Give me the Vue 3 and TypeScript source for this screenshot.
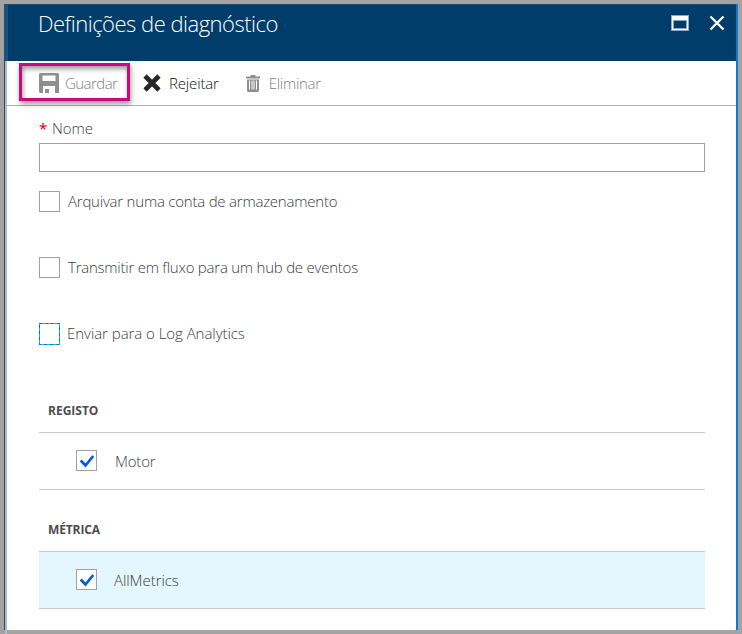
<script setup lang="ts">
import { ref } from 'vue'

interface Destination {
  id: string
  label: string
  checked: boolean
  focused?: boolean
}

interface Category {
  id: string
  title: string
  item: string
  checked: boolean
  highlighted: boolean
}

const name = ref('')

const destinations = ref<Destination[]>([
  { id: 'archive', label: 'Arquivar numa conta de armazenamento', checked: false },
  { id: 'stream', label: 'Transmitir em fluxo para um hub de eventos', checked: false },
  { id: 'send', label: 'Enviar para o Log Analytics', checked: false, focused: true },
])

const categories = ref<Category[]>([
  { id: 'registo', title: 'REGISTO', item: 'Motor', checked: true, highlighted: false },
  { id: 'metrica', title: 'MÉTRICA', item: 'AllMetrics', checked: true, highlighted: true },
])
</script>

<template>
  <div class="frame">
    <section class="blade">
      <header class="header">
        <h1 class="title">Definições de diagnóstico</h1>
        <div class="window-actions">
          <svg class="maximize" width="18" height="16" viewBox="0 0 18 16">
            <rect width="18" height="16" fill="#8ba8c1" />
            <path d="M1 1h16v14H1z" fill="#fff" />
            <path d="M2 5h14v9H2z" fill="#8ba8c1" />
            <path d="M3 6h12v7H3z" fill="#003d6b" />
          </svg>
          <svg class="close" width="16" height="16" viewBox="0 0 16 16">
            <path d="M1.500 1.500l13 13M14.500 1.500l-13 13" stroke="#fff" stroke-width="2.300" />
          </svg>
        </div>
      </header>

      <nav class="toolbar">
        <button class="command save">
          <svg width="20" height="20" viewBox="0 0 20 20">
            <path fill="#8f8f8f" fill-rule="evenodd" d="M1 0h18l1 1v19h-4v-7H4v7H1l-1-1V1zM3.500 2.500V8h13V2.500z" />
            <path fill="#8f8f8f" d="M6 16h4v4H6z" />
          </svg>
          <span class="t-save">Guardar</span>
        </button>
        <button class="command discard">
          <svg width="18" height="18" viewBox="0 0 18 18">
            <path d="M2 2l14 14M16 2L2 16" stroke="#262626" stroke-width="4.600" />
          </svg>
          <span class="t-discard">Rejeitar</span>
        </button>
        <button class="command remove">
          <svg width="14" height="17" viewBox="0 0 14 17">
            <path fill="#8f8f8f" d="M4.500 0h5v1.500H14V3.500H0V1.500h4.500zM1 4.500h12V16l-1 1H2l-1-1z" />
            <path fill="#fff" d="M3 5.500h1v9H3zM5.500 5.500h1v9h-1zM7.500 5.500h1v9h-1zM10 5.500h1v9h-1z" />
          </svg>
          <span class="t-remove">Eliminar</span>
        </button>
      </nav>

      <main class="content">
        <label class="name-label" for="setting-name"><span class="star">*</span><span class="t-name">Nome</span></label>
        <input id="setting-name" v-model="name" class="name-input" type="text" />

        <div class="destinations">
          <label v-for="d in destinations" :key="d.id" class="destination">
            <input v-model="d.checked" type="checkbox" class="native" />
            <span class="box" :class="{ focused: d.focused }">
              <svg v-if="d.focused" width="21" height="22" viewBox="0 0 21 22">
                <rect x=".5" y=".5" width="20" height="21" fill="none" stroke="#12b2f2" />
                <rect x=".5" y=".5" width="20" height="21" fill="none" stroke="#075c91" stroke-dasharray="2 4" />
              </svg>
              <svg v-else-if="d.checked" width="19" height="19" viewBox="0 0 19 19">
                <path d="M3.700 9.500l4.800 5 7.700-9.500" fill="none" stroke="#015cda" stroke-width="2.700" />
              </svg>
            </span>
            <span class="destination-text" :class="'t-' + d.id">{{ d.label }}</span>
          </label>
        </div>

        <section v-for="c in categories" :key="c.id" class="category">
          <h2 :class="'t-' + c.id">{{ c.title }}</h2>
          <label class="row" :class="{ highlighted: c.highlighted }">
            <input v-model="c.checked" type="checkbox" class="native" />
            <span class="box">
              <svg v-if="c.checked" width="19" height="19" viewBox="0 0 19 19">
                <path d="M3.700 9.500l4.800 5 7.700-9.500" fill="none" stroke="#015cda" stroke-width="2.700" />
              </svg>
            </span>
            <span :class="'i-' + c.id">{{ c.item }}</span>
          </label>
        </section>
      </main>
    </section>
  </div>
</template>

<style>
body {
  margin: 0;
  overflow: hidden;
}
</style>

<style scoped>
.frame {
  box-sizing: border-box;
  width: 742px;
  height: 634px;
  padding: 4px;
  background: #a3a3a3;
  font-family: "Open Sans", "Noto Sans", sans-serif;
  font-size: 15px;
  font-weight: 300;
  color: #3c3c3c;
}
.frame * {
  box-sizing: border-box;
}
.blade {
  display: flex;
  flex-direction: column;
  height: 626px;
  background: #fff;
  border-left: 1px solid #164f80;
  border-right: 2px solid #1478c8;
}
.header {
  display: flex;
  justify-content: space-between;
  height: 57px;
  flex: none;
  padding: 0 11px 0 30px;
  background: #003d6b;
  border-left: 3px solid #1c527d;
  border-top: 1px solid #174c75;
  color: #fff;
}
.title {
  margin: 0;
  padding-top: 2px;
  font-size: 22px;
  line-height: 32px;
  font-weight: 300;
  letter-spacing: -0.500px;
  white-space: nowrap;
}
.window-actions {
  display: flex;
  gap: 20px;
  padding-top: 10px;
}
.toolbar {
  display: flex;
  align-items: flex-start;
  height: 45px;
  flex: none;
  padding: 2px 0 0 12px;
  border-left: 2px solid #b9b9b9;
  border-bottom: 1px solid #b0b0b0;
}
.command {
  display: flex;
  align-items: center;
  height: 38px;
  padding: 2px 0 0;
  border: 0;
  background: none;
  font: inherit;
  color: #808080;
  white-space: nowrap;
}
.save {
  width: 111px;
  padding: 1px 0 0 17px;
  gap: 6px;
  border: 3px solid #cc087d;
  box-shadow: 1px 3px 5px rgba(0, 0, 0, 0.400), inset 1px 3px 5px rgba(0, 0, 0, 0.400);
}
.t-save {
  letter-spacing: -0.550px;
}
.discard {
  margin-left: 13px;
  gap: 8px;
  color: #111;
}
.t-discard {
  letter-spacing: -0.150px;
}
.remove {
  margin-left: 27px;
  gap: 9px;
}
.t-remove {
  letter-spacing: -0.300px;
}
.content {
  display: flex;
  flex-direction: column;
  flex: 1;
  padding: 11px 31px 0 32px;
  border-left: 2px solid #b9b9b9;
}
.name-label {
  display: flex;
  height: 26px;
  line-height: 22px;
}
.star {
  width: 13px;
  color: #e81123;
  font-weight: 600;
}
.name-input {
  height: 29px;
  padding: 0 8px;
  border: 1px solid #a0a0a0;
  font: inherit;
  outline: none;
}
.destinations {
  display: flex;
  flex-direction: column;
  gap: 44px;
  padding-top: 19px;
}
.destination {
  display: flex;
  align-items: center;
  gap: 8px;
  height: 22px;
  white-space: nowrap;
}
.destination-text {
  padding-bottom: 2px;
}
.t-archive {
  letter-spacing: -0.220px;
}
.t-stream {
  letter-spacing: -0.235px;
}
.t-send {
  margin-left: -1px;
  letter-spacing: -0.050px;
}
.native {
  display: none;
}
.box {
  display: flex;
  flex: none;
  width: 21px;
  height: 21px;
  margin-bottom: 1px;
  border: 1px solid #a0a0a0;
  background: #fff;
}
.box.focused {
  height: 22px;
  margin-bottom: 0;
  border: 0;
}
.category {
  height: 119px;
}
.category:nth-of-type(1) {
  margin-top: 52px;
}
.category h2 {
  height: 35px;
  margin: 0;
  padding-left: 9px;
  line-height: 27px;
  font-size: 12px;
  font-weight: 700;
  color: #4d4d4d;
}
.t-metrica {
  letter-spacing: -0.120px;
}
.row {
  display: flex;
  align-items: center;
  height: 58px;
  padding-left: 37px;
  gap: 17px;
  border-top: 1px solid #c8c8c8;
  border-bottom: 1px solid #c8c8c8;
}
.i-registo {
  margin-left: 1px;
  letter-spacing: -0.200px;
}
.i-metrica {
  letter-spacing: -0.060px;
}
.row.highlighted {
  background: #e4f7fe;
}
</style>
